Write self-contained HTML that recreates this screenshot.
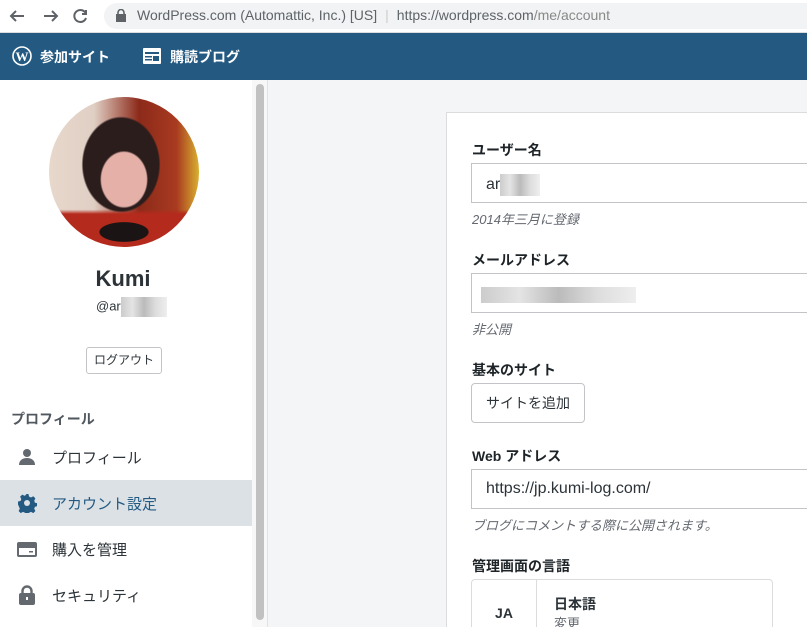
<!DOCTYPE html>
<html><head><meta charset="utf-8"><style>
*{box-sizing:border-box;margin:0;padding:0}
html,body{width:807px;height:627px;overflow:hidden}
body{background:#f3f5f6;font-family:"Liberation Sans","Noto Sans CJK JP",sans-serif;position:relative;color:#2c3338}
.chrome{position:absolute;left:0;top:0;width:807px;height:33px;background:#fff;border-bottom:1px solid #ddd}
.url{position:absolute;left:104px;top:3px;width:720px;height:26px;background:#f1f3f4;border-radius:13px}
.nav{position:absolute;left:0;top:33px;width:807px;height:47px;background:#245a82;color:#fff;font-weight:bold;font-size:14px}
.side{position:absolute;left:0;top:80px;width:252px;height:547px;background:#fff}
.sb{position:absolute;left:252px;top:80px;width:16px;height:547px;background:#f7f7f7;border-right:1px solid #e2e2e2}
.sb div{position:absolute;left:4px;top:4px;width:8px;height:536px;background:#c1c1c1;border-radius:4px}
.card{position:absolute;left:446px;top:112px;width:370px;height:515px;background:#fff;border:1px solid #dcdcde;border-bottom:none;overflow:hidden}
.lbl{position:absolute;left:25px;font-size:14px;font-weight:bold;color:#1d2327}
.inp{position:absolute;left:24px;width:360px;height:40px;border:1px solid #c3c4c7;background:#fff;font-size:16px;padding:10px 14px;color:#2c3338}
.hint{position:absolute;left:25px;font-size:13px;font-style:italic;color:#646970}
.blur{display:inline-block;background:linear-gradient(90deg,#ccc,#e4e4e4,#bbb,#ddd,#eee);height:14px;vertical-align:middle}
.mi{position:absolute;left:0;width:252px;height:46px;font-size:15px;color:#2c3338}
.mi span{position:absolute;left:52px;top:13px}
.mi svg{position:absolute;left:17px;top:13px}
</style></head><body>
<div class="chrome">
<svg style="position:absolute;left:8px;top:8px" width="80" height="16" viewBox="0 0 80 16" fill="none" stroke="#5f6368" stroke-width="2"><path d="M16 8H3M8 3L3 8l5 5"/><path d="M36 8h13M44 3l5 5-5 5"/><path d="M78 6a6 6 0 1 0 0 4"/><path d="M78 2v4h-4" /></svg>
<div class="url"></div>
<svg style="position:absolute;left:116px;top:9px" width="10" height="13"><rect x="0" y="5" width="10" height="8" fill="#5f6368"/><path d="M2 5V3.5a3 3 0 0 1 6 0V5" stroke="#5f6368" stroke-width="1.6" fill="none"/></svg>
<div style="position:absolute;left:137px;top:7px;font-size:14px;color:#5f6368">WordPress.com (Automattic, Inc.) [US]<span style="color:#ccc;margin:0 8px">|</span><span style="color:#5f6368">https://wordpress.com</span><span style="color:#888">/me/account</span></div>
</div>
<div class="nav">
<svg style="position:absolute;left:12px;top:13px" width="20" height="20" viewBox="0 0 20 20"><circle cx="10" cy="10" r="9" fill="none" stroke="#fff" stroke-width="1.6"/><text x="10" y="15" font-size="13" font-weight="bold" text-anchor="middle" fill="#fff" font-family="Liberation Serif,serif">W</text></svg>
<span style="position:absolute;left:40px;top:14px">参加サイト</span>
<svg style="position:absolute;left:143px;top:15px" width="18" height="16"><rect x="0" y="0" width="18" height="16" rx="1" fill="#fff"/><rect x="2" y="4" width="14" height="2" fill="#245a82"/><rect x="2" y="8" width="7" height="1.5" fill="#245a82"/><rect x="2" y="11" width="7" height="1.5" fill="#245a82"/><rect x="10" y="8" width="6" height="5" fill="#245a82"/></svg>
<span style="position:absolute;left:170px;top:14px">購読ブログ</span>
</div>
<div class="side">
<div style="position:absolute;left:49px;top:17px;width:150px;height:150px;border-radius:50%;overflow:hidden;background:radial-gradient(ellipse 25% 30% at 50% 55%,#e4b0a8 60%,transparent 64%),radial-gradient(ellipse 20% 8% at 50% 90%,#1a1414 80%,transparent 84%),radial-gradient(ellipse 36% 44% at 48% 45%,#2a1d1c 70%,transparent 73%),linear-gradient(180deg,transparent 75%,#b42a1c 78%),linear-gradient(90deg,#e8d8cc 0%,#e0cfc4 30%,#8c2a1a 60%,#a83a20 85%,#d9b030 100%)"></div>
<div style="position:absolute;left:0;width:246px;top:186px;text-align:center;font-size:22px;font-weight:bold;color:#2c3338">Kumi</div>
<div style="position:absolute;left:96px;top:217px;font-size:13px;color:#2c3338">@ar<span class="blur" style="width:46px;height:20px"></span></div>
<div style="position:absolute;left:86px;top:267px;width:76px;height:27px;border:1px solid #c3c4c7;border-radius:3px;font-size:12px;text-align:center;line-height:25px;color:#2c3338">ログアウト</div>
<div style="position:absolute;left:11px;top:329px;font-size:14px;font-weight:bold;color:#50575e">プロフィール</div>
<div class="mi" style="top:354px"><svg width="20" height="20" viewBox="0 0 20 20" fill="#646970"><circle cx="10" cy="6" r="4"/><path d="M2 18c0-5 4-7 8-7s8 2 8 7z"/></svg><span>プロフィール</span></div>
<div class="mi" style="top:400px;background:#dce1e6;color:#245a82"><svg width="20" height="20" viewBox="0 0 20 20"><path fill="#245a82" d="M8.5 1h3l.5 2.5 2 1 2.3-1.2 2.1 2.1-1.2 2.3.8 2 2.5.5v3l-2.5.5-.8 2 1.2 2.3-2.1 2.1-2.3-1.2-2 .8-.5 2.5h-3l-.5-2.5-2-.8-2.3 1.2-2.1-2.1 1.2-2.3-.8-2L1 11.5v-3l2.5-.5.8-2-1.2-2.3 2.1-2.1 2.3 1.2 2-1z"/><circle cx="10" cy="10" r="3" fill="#dce1e6"/></svg><span>アカウント設定</span></div>
<div class="mi" style="top:446px"><svg width="20" height="20" viewBox="0 0 20 20"><rect x="0" y="3" width="20" height="15" rx="2" fill="#646970"/><rect x="2" y="9" width="16" height="7" fill="#fff"/><rect x="12" y="12" width="4" height="1.5" fill="#646970"/></svg><span>購入を管理</span></div>
<div class="mi" style="top:492px"><svg width="20" height="20" viewBox="0 0 20 20"><rect x="2" y="8" width="16" height="12" rx="2" fill="#646970"/><path d="M5.5 8V6a4.5 4.5 0 0 1 9 0v2" stroke="#646970" stroke-width="2.4" fill="none"/><rect x="9" y="12" width="2" height="3" fill="#fff"/></svg><span>セキュリティ</span></div>
</div>
<div class="sb"><div></div></div>
<div class="card">
<div class="lbl" style="top:27px">ユーザー名</div>
<div class="inp" style="top:50px">ar<span class="blur" style="width:40px;height:22px"></span></div>
<div class="hint" style="top:96px">2014年三月に登録</div>
<div class="lbl" style="top:137px">メールアドレス</div>
<div class="inp" style="top:160px;padding-top:12px"><span class="blur" style="width:155px;height:16px;margin-left:-5px"></span></div>
<div class="hint" style="top:206px">非公開</div>
<div class="lbl" style="top:247px">基本のサイト</div>
<div style="position:absolute;left:24px;top:270px;width:114px;height:40px;border:1px solid #c3c4c7;border-radius:4px;font-size:14px;text-align:center;line-height:38px">サイトを追加</div>
<div class="lbl" style="top:333px">Web アドレス</div>
<div class="inp" style="top:356px">https://jp.kumi-log.com/</div>
<div class="hint" style="top:402px">ブログにコメントする際に公開されます。</div>
<div class="lbl" style="top:443px">管理画面の言語</div>
<div style="position:absolute;left:24px;top:466px;width:302px;height:70px;border:1px solid #dcdcde;border-radius:4px">
<div style="position:absolute;left:0;top:0;width:65px;height:70px;border-right:1px solid #dcdcde;text-align:center;padding-top:25px;font-weight:bold;font-size:14px">JA</div>
<div style="position:absolute;left:82px;top:14px;font-weight:bold;font-size:14px">日本語</div>
<div style="position:absolute;left:82px;top:33px;font-size:13px;color:#646970">変更</div>
</div>
</div>
</body></html>
